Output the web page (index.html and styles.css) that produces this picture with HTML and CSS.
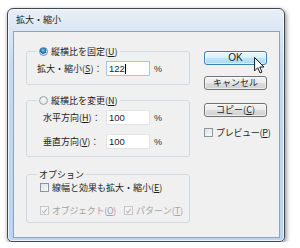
FILE: index.html
```html
<!DOCTYPE html>
<html lang="ja">
<head>
<meta charset="utf-8">
<link rel="stylesheet" href="styles.css">
</head>
<body>
<div class="window">
  <div class="titlebar">拡大・縮小</div>
  <div class="client">
    <div class="groups">
      <fieldset class="group g1">
        <legend><span class="radio on"></span>縦横比を固定(<u>U</u>)</legend>
        <div class="row r1">
          <span class="lbl wide">拡大・縮小(<u>S</u>)：</span>
          <span class="input focus">122<span class="caret"></span></span>
          <span class="unit">%</span>
        </div>
      </fieldset>
      <fieldset class="group g2">
        <legend><span class="radio"></span>縦横比を変更(<u>N</u>)</legend>
        <div class="row r1 indent">
          <span class="lbl">水平方向(<u>H</u>)：</span>
          <span class="input">100</span>
          <span class="unit">%</span>
        </div>
        <div class="row r2 indent">
          <span class="lbl">垂直方向(<u>V</u>)：</span>
          <span class="input">100</span>
          <span class="unit">%</span>
        </div>
      </fieldset>
      <fieldset class="group g3">
        <legend>オプション</legend>
        <div class="crow c1">
          <span class="check"></span><span>線幅と効果も拡大・縮小(<u>E</u>)</span>
        </div>
        <div class="crow c2 disabled">
          <span class="check checked"><svg viewBox="0 0 8 8" width="8" height="8"><path d="M1.5 4.2 L3.3 6 L6.6 1.6" fill="none" stroke="#b4b4b4" stroke-width="1.2"/></svg></span><span class="ctext">オブジェクト(<u>O</u>)</span>
          <span class="check checked"><svg viewBox="0 0 8 8" width="8" height="8"><path d="M1.5 4.2 L3.3 6 L6.6 1.6" fill="none" stroke="#b4b4b4" stroke-width="1.2"/></svg></span><span>パターン(<u>T</u>)</span>
        </div>
      </fieldset>
    </div>
    <div class="buttons">
      <div class="btn default">OK</div>
      <div class="btn b2">キャンセル</div>
      <div class="btn b3">コピー(<u>C</u>)</div>
      <div class="crow preview"><span class="check"></span><span>プレビュー(<u>P</u>)</span></div>
    </div>
  </div>
  <svg class="cursor" viewBox="0 0 12 19" width="11" height="17"><path d="M0.5 0.5 L0.5 15.5 L4 12 L6.6 17.8 L8.8 16.8 L6.3 11.2 L11 11.2 Z" fill="#fff" stroke="#000" stroke-width="1" stroke-linejoin="round"/></svg>
</div>
</body>
</html>
```
FILE: styles.css
```css
* { box-sizing: border-box; }
html, body { margin: 0; padding: 0; background: #fff; }
body {
  padding: 8px 0 0 7px;
  font-family: "Noto Sans CJK JP", "Noto Sans", sans-serif;
  font-size: 9px;
  color: #1e1e1e;
}
u { text-decoration: underline; text-underline-offset: 1px; }

.window {
  position: relative;
  width: 278px;
  height: 234px;
  border: 1px solid #3e4854;
  border-radius: 6px 6px 5px 5px;
  background: linear-gradient(#e9eff7 0px, #dbe6f2 22px, #c6daf0 60px, #bcd4ee 100%);
  box-shadow: 1px 2px 5px rgba(0,0,0,0.5), inset 0 0 0 1px rgba(255,255,255,0.7);
  padding: 0 4px 3px 5px;
  display: flex;
  flex-direction: column;
}
.titlebar {
  height: 22px;
  line-height: 22px;
  padding-left: 3px;
  color: #1e1e1e;
  font-size: 9px;
}
.client {
  flex: 1;
  background: #f0f0f0;
  border: 1px solid #8fa3ba;
  padding: 14px 0 0 12px;
  display: flex;
  gap: 14px;
}
.groups { width: 164px; display: flex; flex-direction: column; }

.group {
  margin: 0;
  padding: 0;
  border: 1px solid #d2d9df;
  border-radius: 3px;
  min-width: 0;
}
.group legend {
  margin-left: 10px;
  padding: 0 2px;
  line-height: 11px;
  height: 11px;
  display: flex;
  align-items: center;
}
.g1 { padding-bottom: 8px; }
.g2 { margin-top: 10px; padding-bottom: 7px; }
.g3 { margin-top: 12px; padding-bottom: 5px; }

.radio {
  width: 9px; height: 9px;
  border-radius: 50%;
  border: 1px solid #9aa4ae;
  background: radial-gradient(circle at 50% 40%, #fafafa, #dcdcdc);
  margin-right: 3px;
  display: inline-block;
  position: relative;
}
.radio.on {
  border-color: #6a87a6;
  background: radial-gradient(circle at 45% 35%, #9fe0ff 0, #2e8fcf 1.6px, #1a5f95 3.2px, #e8eef4 3.4px, #f4f6f8 100%);
}

.row {
  display: flex;
  align-items: center;
  height: 15px;
  padding-left: 10px;
}
.row.indent { padding-left: 16px; }
.r1 { margin-top: 4px; }
.r2 { margin-top: 9px; }
.lbl { width: 69px; white-space: nowrap; }
.row.indent .lbl { width: 63px; }
.input {
  width: 44px;
  height: 15px;
  background: #fff;
  border: 1px solid #e2e4e7;
  font-family: "Liberation Sans", Arial, sans-serif;
  font-size: 9.5px;
  line-height: 13px;
  padding-left: 2px;
  display: flex;
  align-items: center;
}
.input.focus { border-color: #a9c6e4; }
.caret { width: 1px; height: 10px; background: #000; margin-left: 0; }
.unit {
  margin-left: 4px;
  font-family: "Liberation Sans", Arial, sans-serif;
  font-size: 9px;
  color: #333;
}

.crow {
  display: flex;
  align-items: center;
  height: 13px;
  padding-left: 13px;
  white-space: nowrap;
}
.c1 { margin-top: 1px; }
.c2 { margin-top: 10px; }
.check {
  width: 9px; height: 9px;
  border: 1px solid #8d96a0;
  background: linear-gradient(135deg, #dfe2e6, #f7f8f9);
  margin-right: 3px;
  display: inline-flex;
  align-items: center;
  justify-content: center;
  flex: none;
}
.disabled { color: #a3a3a3; }
.disabled .check { border-color: #c4c8cc; background: #f4f4f4; }
.ctext { margin-right: 8px; letter-spacing: -0.3px; }

.buttons {
  width: 63px;
  display: flex;
  flex-direction: column;
  padding-top: 5px;
}
.btn {
  height: 14px;
  border: 1px solid #737373;
  border-radius: 3px;
  background: linear-gradient(#f3f3f3 0, #ebebeb 50%, #dddddd 50%, #d0d0d0 100%);
  box-shadow: inset 0 0 0 1px rgba(255,255,255,0.6);
  text-align: center;
  line-height: 12px;
  font-size: 9px;
  color: #1e1e1e;
}
.btn.default {
  border-color: #3c7fb1;
  background: linear-gradient(#eaf6fd 0, #d9f0fc 50%, #bee6fd 50%, #a7d9f5 100%);
  font-family: "Liberation Sans", Arial, sans-serif;
  font-size: 10px;
}
.b2 { margin-top: 11px; }
.b3 { margin-top: 13px; }
.preview { margin-top: 10px; padding-left: 0; height: 11px; letter-spacing: -0.3px; }

.cursor {
  position: absolute;
  left: 246px;
  top: 48px;
}
```
